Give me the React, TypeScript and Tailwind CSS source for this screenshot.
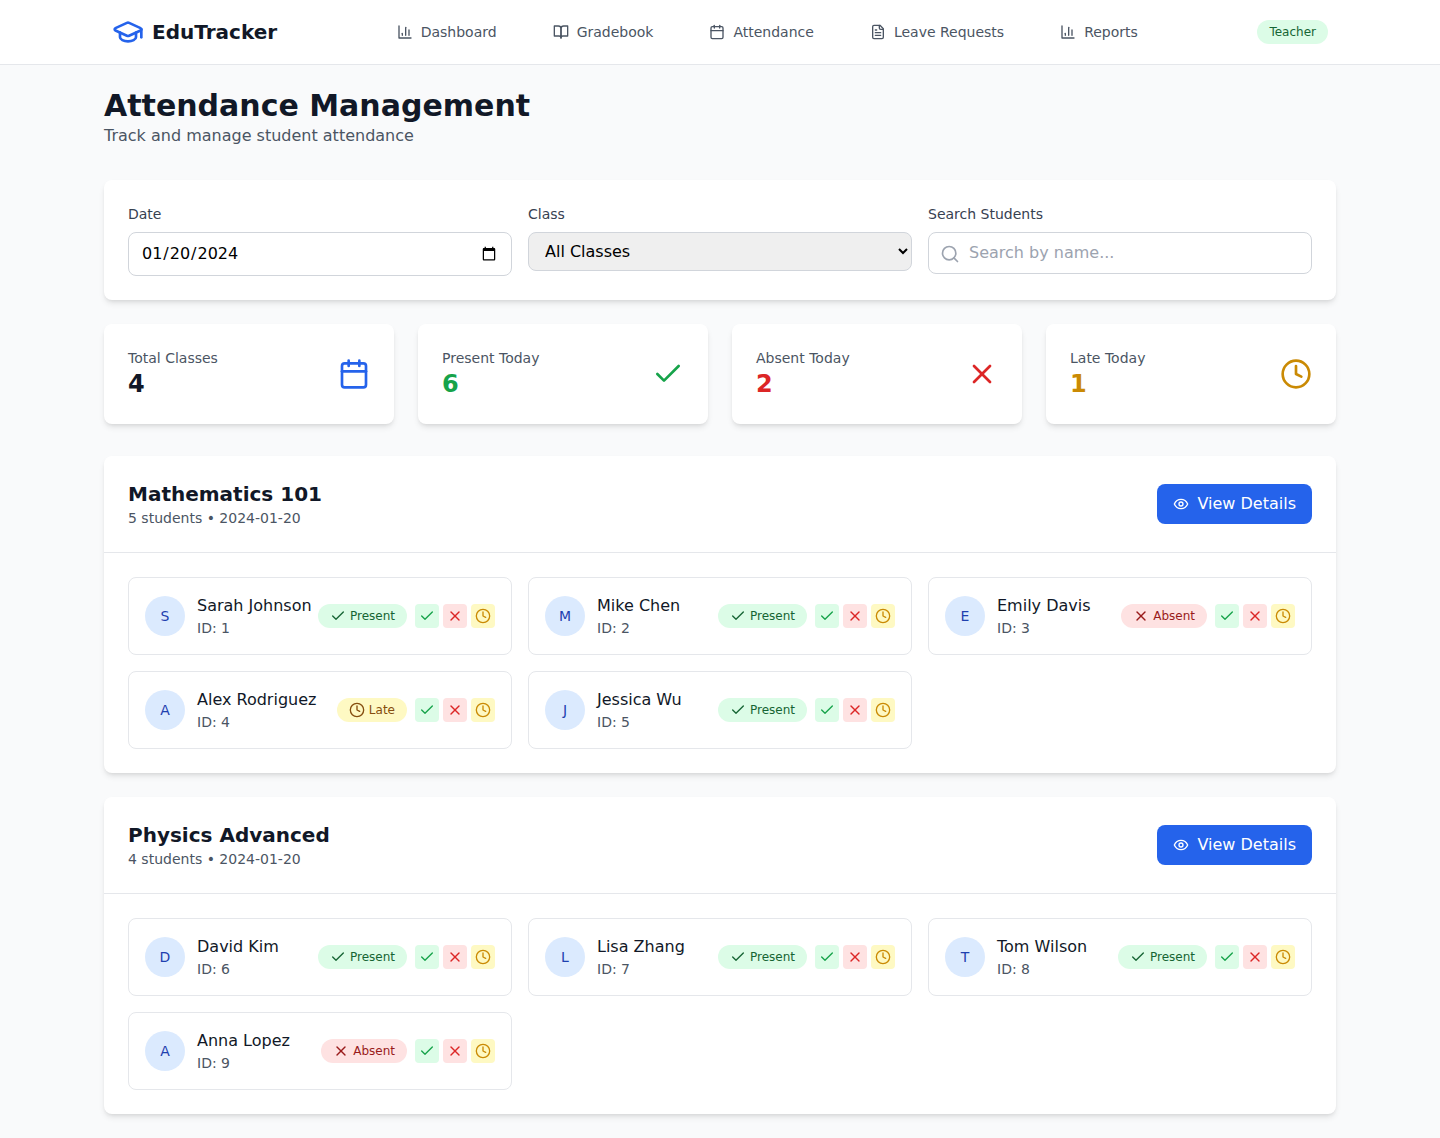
import { useState, type ReactNode } from "react";
import { Calendar, Check, Clock, GraduationCap, Search, X } from "lucide-react";

type Status = "Present" | "Absent" | "Late";

interface Student {
  id: number;
  name: string;
  status: Status;
}

interface ClassGroup {
  name: string;
  date: string;
  students: Student[];
}

interface IconProps {
  className?: string;
}

function Stroke({ className, children }: IconProps & { children: ReactNode }) {
  return (
    <svg
      viewBox="0 0 24 24"
      fill="none"
      stroke="currentColor"
      strokeWidth="2"
      strokeLinecap="round"
      strokeLinejoin="round"
      aria-hidden="true"
      className={className}
    >
      {children}
    </svg>
  );
}

function ChartIcon({ className }: IconProps) {
  return (
    <Stroke className={className}>
      <path d="M3 3v18h18" />
      <path d="M18 17V9" />
      <path d="M13 17V5" />
      <path d="M8 17v-3" />
    </Stroke>
  );
}

function BookIcon({ className }: IconProps) {
  return (
    <Stroke className={className}>
      <path d="M2 3h6a4 4 0 0 1 4 4v14a3 3 0 0 0-3-3H2z" />
      <path d="M22 3h-6a4 4 0 0 0-4 4v14a3 3 0 0 1 3-3h7z" />
    </Stroke>
  );
}

function FileIcon({ className }: IconProps) {
  return (
    <Stroke className={className}>
      <path d="M15 2H6a2 2 0 0 0-2 2v16a2 2 0 0 0 2 2h12a2 2 0 0 0 2-2V7Z" />
      <path d="M14 2v4a2 2 0 0 0 2 2h4" />
      <path d="M10 9H8" />
      <path d="M16 13H8" />
      <path d="M16 17H8" />
    </Stroke>
  );
}

function EyeIcon({ className }: IconProps) {
  return (
    <Stroke className={className}>
      <path d="M2 12s3-7 10-7 10 7 10 7-3 7-10 7-10-7-10-7Z" />
      <circle cx="12" cy="12" r="3" />
    </Stroke>
  );
}

const navItems = [
  { label: "Dashboard", icon: ChartIcon },
  { label: "Gradebook", icon: BookIcon },
  { label: "Attendance", icon: Calendar },
  { label: "Leave Requests", icon: FileIcon },
  { label: "Reports", icon: ChartIcon },
];

const stats = [
  { label: "Total Classes", value: 4, icon: Calendar, text: "text-[#111827]", tint: "text-[#2563eb]" },
  { label: "Present Today", value: 6, icon: Check, text: "text-[#16a34a]", tint: "text-[#16a34a]" },
  { label: "Absent Today", value: 2, icon: X, text: "text-[#dc2626]", tint: "text-[#dc2626]" },
  { label: "Late Today", value: 1, icon: Clock, text: "text-[#ca8a04]", tint: "text-[#ca8a04]" },
];

const classes: ClassGroup[] = [
  {
    name: "Mathematics 101",
    date: "2024-01-20",
    students: [
      { id: 1, name: "Sarah Johnson", status: "Present" },
      { id: 2, name: "Mike Chen", status: "Present" },
      { id: 3, name: "Emily Davis", status: "Absent" },
      { id: 4, name: "Alex Rodriguez", status: "Late" },
      { id: 5, name: "Jessica Wu", status: "Present" },
    ],
  },
  {
    name: "Physics Advanced",
    date: "2024-01-20",
    students: [
      { id: 6, name: "David Kim", status: "Present" },
      { id: 7, name: "Lisa Zhang", status: "Present" },
      { id: 8, name: "Tom Wilson", status: "Present" },
      { id: 9, name: "Anna Lopez", status: "Absent" },
    ],
  },
];

const statusStyles = {
  Present: {
    icon: Check,
    badge: "bg-[#dcfce7] text-[#166534]",
    button: "bg-[#dcfce7] text-[#16a34a]",
  },
  Absent: {
    icon: X,
    badge: "bg-[#fee2e2] text-[#991b1b]",
    button: "bg-[#fee2e2] text-[#dc2626]",
  },
  Late: {
    icon: Clock,
    badge: "bg-[#fef9c3] text-[#854d0e]",
    button: "bg-[#fef9c3] text-[#ca8a04]",
  },
};

const statuses: Status[] = ["Present", "Absent", "Late"];

const cardShadow =
  "shadow-[0_4px_6px_-1px_rgba(0,0,0,0.1),0_2px_4px_-2px_rgba(0,0,0,0.1)]";

function Header() {
  return (
    <header className="h-16 bg-white shadow-[0_1px_0_#e5e7eb]">
      <div className="mx-auto flex h-16 max-w-7xl items-center justify-between px-8">
        <a href="#" className="flex items-center gap-2">
          <GraduationCap className="size-8 text-[#2563eb]" />
          <span className="text-xl font-bold">EduTracker</span>
        </a>
        <nav className="flex gap-8">
          {navItems.map(({ label, icon: Icon }) => (
            <a
              key={label}
              href="#"
              className="flex items-center gap-2 px-3 py-2 text-sm text-[#4b5563]"
            >
              <Icon className="size-4" />
              {label}
            </a>
          ))}
        </nav>
        <span className="rounded-full bg-[#dcfce7] px-3 py-1 text-xs text-[#166534]">
          Teacher
        </span>
      </div>
    </header>
  );
}

function Filters() {
  const [date, setDate] = useState("2024-01-20");
  const [search, setSearch] = useState("");
  return (
    <section className={`mb-6 rounded-lg bg-white p-6 ${cardShadow}`}>
      <div className="grid grid-cols-3 items-start gap-4">
        <div>
          <label htmlFor="date" className="mb-2 block text-sm text-[#374151]">
            Date
          </label>
          <input
            id="date"
            type="date"
            value={date}
            onChange={(e) => setDate(e.target.value)}
            className="block h-11 w-full rounded-lg border border-[#d1d5db] bg-white px-3 py-2 text-black"
          />
        </div>
        <div>
          <label htmlFor="class" className="mb-2 block text-sm text-[#374151]">
            Class
          </label>
          <select
            id="class"
            className="block w-full rounded-lg border border-[#d1d5db] bg-[#efefef] px-3 py-2 text-black"
          >
            <option>All Classes</option>
            <option>Mathematics 101</option>
            <option>Physics Advanced</option>
          </select>
        </div>
        <div>
          <label htmlFor="search" className="mb-2 block text-sm text-[#374151]">
            Search Students
          </label>
          <div className="relative">
            <Search className="absolute top-3 left-3 size-5 text-[#9ca3af]" />
            <input
              id="search"
              type="text"
              placeholder="Search by name..."
              value={search}
              onChange={(e) => setSearch(e.target.value)}
              className="block w-full rounded-lg border border-[#d1d5db] bg-white py-2 pr-4 pl-10 placeholder:text-[#9ca3af]"
            />
          </div>
        </div>
      </div>
    </section>
  );
}

function Stats() {
  return (
    <section className="mb-8 grid grid-cols-4 gap-6">
      {stats.map(({ label, value, icon: Icon, text, tint }) => (
        <div
          key={label}
          className={`flex items-center justify-between rounded-lg bg-white p-6 ${cardShadow}`}
        >
          <div>
            <p className="text-sm text-[#4b5563]">{label}</p>
            <p className={`text-2xl font-bold ${text}`}>{value}</p>
          </div>
          <Icon className={`size-8 ${tint}`} />
        </div>
      ))}
    </section>
  );
}

function StudentCard({ student }: { student: Student }) {
  const { icon: StatusIcon, badge } = statusStyles[student.status];
  return (
    <li className="flex items-center justify-between rounded-lg border border-[#e5e7eb] p-4">
      <div className="flex items-center gap-3">
        <div className="flex size-10 items-center justify-center rounded-full bg-[#dbeafe] text-sm text-[#1e40af]">
          {student.name.charAt(0)}
        </div>
        <div>
          <p className="whitespace-nowrap">{student.name}</p>
          <p className="text-sm text-[#4b5563]">ID: {student.id}</p>
        </div>
      </div>
      <div className="flex items-center gap-2">
        <span
          className={`flex items-center gap-1 rounded-full px-3 py-1 text-xs ${badge}`}
        >
          <StatusIcon className="size-4" />
          {student.status}
        </span>
        <div className="flex gap-1">
          {statuses.map((status) => {
            const { icon: Icon, button } = statusStyles[status];
            return (
              <button
                key={status}
                type="button"
                aria-label={`Mark ${student.name} ${status}`}
                className={`rounded-sm p-1 ${button}`}
              >
                <Icon className="size-4" />
              </button>
            );
          })}
        </div>
      </div>
    </li>
  );
}

function ClassSection({ group }: { group: ClassGroup }) {
  return (
    <section className={`rounded-lg bg-white ${cardShadow}`}>
      <div className="flex items-center justify-between border-b border-[#e5e7eb] p-6">
        <div>
          <h2 className="text-xl font-semibold">{group.name}</h2>
          <p className="text-sm text-[#4b5563]">
            {group.students.length} students • {group.date}
          </p>
        </div>
        <button
          type="button"
          className="flex items-center gap-2 rounded-lg bg-[#2563eb] px-4 py-2 text-white"
        >
          <EyeIcon className="size-4" />
          View Details
        </button>
      </div>
      <ul className="grid grid-cols-3 gap-4 p-6">
        {group.students.map((student) => (
          <StudentCard key={student.id} student={student} />
        ))}
      </ul>
    </section>
  );
}

export default function App() {
  return (
    <div className="min-h-screen bg-[#f9fafb] font-['DejaVu_Sans',sans-serif] text-[#111827]">
      <Header />
      <main className="mx-auto max-w-7xl p-6">
        <div className="mb-8">
          <h1 className="text-3xl font-bold">Attendance Management</h1>
          <p className="text-[#4b5563]">Track and manage student attendance</p>
        </div>
        <Filters />
        <Stats />
        <div className="space-y-6">
          {classes.map((group) => (
            <ClassSection key={group.name} group={group} />
          ))}
        </div>
      </main>
    </div>
  );
}
